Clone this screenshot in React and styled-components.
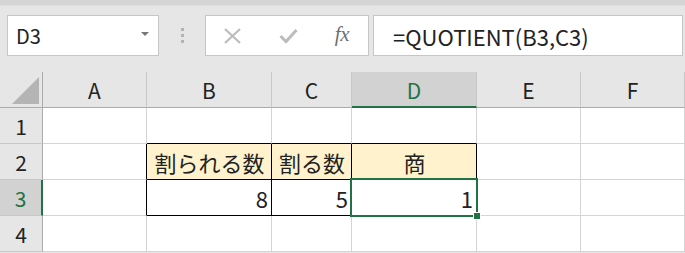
import React from 'react'
import styled, { createGlobalStyle } from 'styled-components'

const GREEN = '#217346'
const GRID = '#d4d4d4'
const HEAD_LINE = '#ababab'

const Global = createGlobalStyle`
  html, body {
    margin: 0;
    padding: 0;
    background: #e6e6e6;
    overflow: hidden;
  }
  * { box-sizing: border-box; }
`

const Page = styled.div`
  width: 685px;
  height: 253px;
  display: flex;
  flex-direction: column;
  font-family: "Noto Sans CJK JP", "Liberation Sans", sans-serif;
  color: #222;
`

const TopBand = styled.div`
  height: 6px;
  background: #d5d5d5;
  border-bottom: 1px solid #dedede;
`

const Toolbar = styled.div`
  display: flex;
  align-items: stretch;
  height: 66px;
  padding: 9px 0 16px 7px;
`

const Box = styled.div`
  background: #fff;
  border: 1px solid #c6c6c6;
  display: flex;
  align-items: center;
`

const NameBox = styled(Box)`
  width: 152px;
  padding: 0 9px 0 8px;
  justify-content: space-between;
  font-size: 20px;
`

const DropArrow = styled.span`
  width: 0;
  height: 0;
  border-left: 4px solid transparent;
  border-right: 4px solid transparent;
  border-top: 4px solid #777;
  margin-top: -4px;
`

const Grip = styled.div`
  width: 46px;
  display: flex;
  flex-direction: column;
  align-items: center;
  justify-content: center;
  gap: 3px;
  span {
    width: 3px;
    height: 3px;
    background: #b3b3b3;
  }
`

const FxBox = styled(Box)`
  width: 164px;
  padding: 0 19px 0 17px;
  justify-content: space-between;
`

const Fx = styled.span`
  font-family: "Liberation Serif", serif;
  font-style: italic;
  font-size: 21px;
  color: #6f6f6f;
  letter-spacing: -0.5px;
  margin-top: -2px;
`

const FormulaBox = styled(Box)`
  flex: 1;
  margin-left: 4px;
  margin-right: 2px;
  padding-left: 19px;
  font-size: 22px;
`

const Sheet = styled.div`
  display: grid;
  grid-template-columns: 43px 104px 125px 80px 125px 104px 1fr;
  grid-auto-rows: 36px;
`

const ColHead = styled.div`
  display: flex;
  align-items: center;
  justify-content: center;
  font-size: 21px;
  padding-top: ${({ $active }) => ($active ? '1px' : '0')};
  background: ${({ $active }) => ($active ? '#d2d2d2' : '#e6e6e6')};
  color: ${({ $active }) => ($active ? GREEN : '#222')};
  border-right: 1px solid #c8c8c8;
  border-bottom: ${({ $active }) => ($active ? `2px solid ${GREEN}` : `1px solid ${HEAD_LINE}`)};
`

const Corner = styled.div`
  background: #e6e6e6;
  border-right: 1px solid ${HEAD_LINE};
  border-bottom: 1px solid ${HEAD_LINE};
  display: flex;
  align-items: flex-end;
  justify-content: flex-end;
  padding: 0 3px 3px 0;
`

const RowHead = styled.div`
  display: flex;
  align-items: center;
  justify-content: center;
  font-size: 21px;
  background: ${({ $active }) => ($active ? '#d2d2d2' : '#e6e6e6')};
  color: ${({ $active }) => ($active ? GREEN : '#222')};
  border-right: ${({ $active }) => ($active ? `2px solid ${GREEN}` : `1px solid ${HEAD_LINE}`)};
  border-bottom: 1px solid #c8c8c8;
`

const Cell = styled.div`
  position: relative;
  display: flex;
  align-items: center;
  justify-content: ${({ $align }) => $align || 'flex-start'};
  padding: 0 3px 0 4px;
  font-size: 22px;
  white-space: nowrap;
  background: ${({ $fill }) => $fill || '#fff'};
  border-right: 1px solid ${({ $rb }) => ($rb ? '#000' : GRID)};
  border-bottom: 1px solid ${({ $bb }) => ($bb ? '#000' : GRID)};
`

const Selected = styled(Cell)`
  &::after {
    content: '';
    position: absolute;
    inset: -2px -2px -2px -2px;
    border: 2px solid ${GREEN};
    z-index: 2;
    pointer-events: none;
  }
`

const Handle = styled.span`
  position: absolute;
  right: -5px;
  bottom: -5px;
  width: 8px;
  height: 8px;
  background: ${GREEN};
  border: 1px solid #fff;
  z-index: 3;
`

const CornerMark = () => (
  <svg width="27" height="27" viewBox="0 0 27 27">
    <polygon points="27,0 27,27 0,27" fill="#b4b4b4" />
  </svg>
)

const CancelIcon = () => (
  <svg width="19" height="16" viewBox="0 0 19 16">
    <path d="M2 1 L17 15 M17 1 L2 15" stroke="#bcbcbc" strokeWidth="2.2" fill="none" />
  </svg>
)

const CheckIcon = () => (
  <svg width="19" height="16" viewBox="0 0 19 16">
    <path d="M1.5 8 L7 13.5 L17.5 2" stroke="#bcbcbc" strokeWidth="3" fill="none" />
  </svg>
)

const HEADER_FILL = '#fff2cc'
const cols = ['A', 'B', 'C', 'D', 'E', 'F']

export default function App() {
  return (
    <Page>
      <Global />
      <TopBand />
      <Toolbar>
        <NameBox>
          <span>D3</span>
          <DropArrow />
        </NameBox>
        <Grip>
          <span />
          <span />
          <span />
        </Grip>
        <FxBox>
          <CancelIcon />
          <CheckIcon />
          <Fx>fx</Fx>
        </FxBox>
        <FormulaBox>=QUOTIENT(B3,C3)</FormulaBox>
      </Toolbar>

      <Sheet>
        <Corner>
          <CornerMark />
        </Corner>
        {cols.map((c) => (
          <ColHead key={c} $active={c === 'D'}>{c}</ColHead>
        ))}

        <RowHead>1</RowHead>
        <Cell />
        <Cell $bb />
        <Cell $bb />
        <Cell $bb />
        <Cell />
        <Cell />

        <RowHead>2</RowHead>
        <Cell $rb />
        <Cell $rb $bb $fill={HEADER_FILL} $align="center">割られる数</Cell>
        <Cell $rb $bb $fill={HEADER_FILL} $align="center">割る数</Cell>
        <Cell $rb $bb $fill={HEADER_FILL} $align="center">商</Cell>
        <Cell />
        <Cell />

        <RowHead $active>3</RowHead>
        <Cell $rb />
        <Cell $rb $bb $align="flex-end">8</Cell>
        <Cell $rb $bb $align="flex-end">5</Cell>
        <Selected $rb $bb $align="flex-end">
          1
          <Handle />
        </Selected>
        <Cell />
        <Cell />

        <RowHead>4</RowHead>
        <Cell />
        <Cell />
        <Cell />
        <Cell />
        <Cell />
        <Cell />
      </Sheet>
    </Page>
  )
}
